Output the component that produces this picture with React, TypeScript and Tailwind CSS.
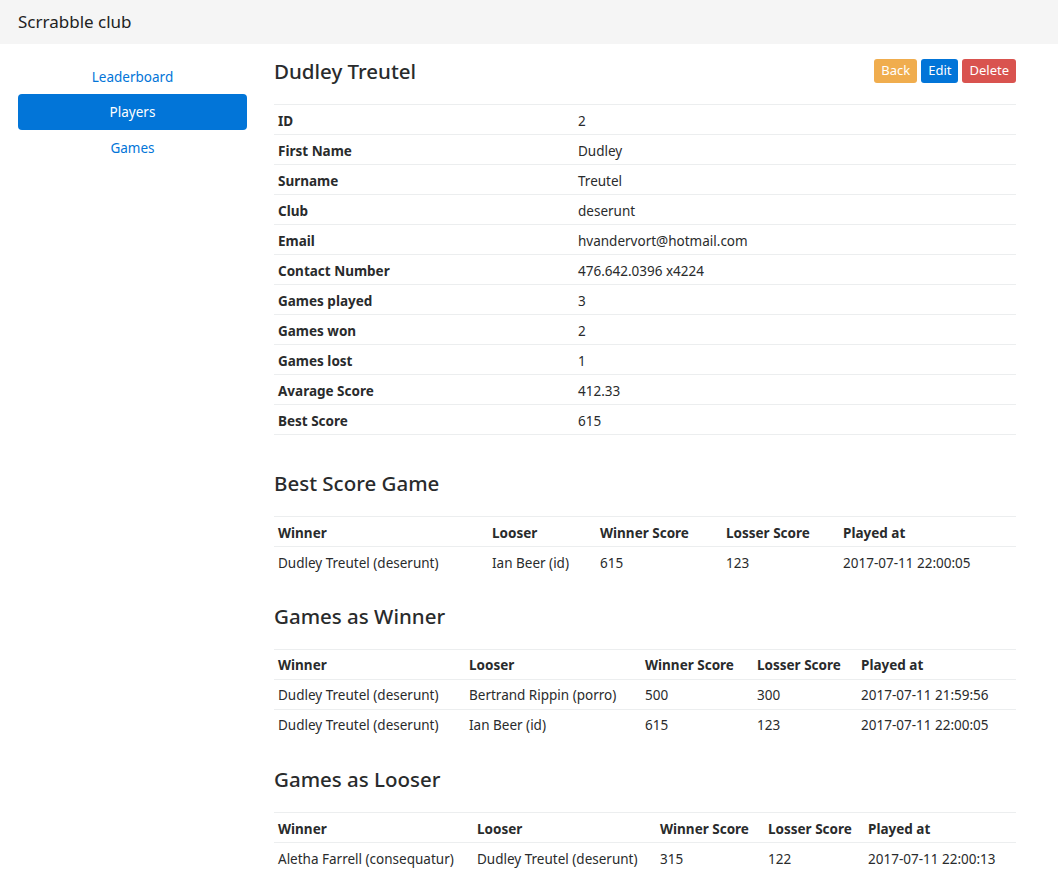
import React from "react";

type GameRow = {
  winner: string;
  looser: string;
  winnerScore: number;
  losserScore: number;
  playedAt: string;
};

const details: [string, string][] = [
  ["ID", "2"],
  ["First Name", "Dudley"],
  ["Surname", "Treutel"],
  ["Club", "deserunt"],
  ["Email", "hvandervort@hotmail.com"],
  ["Contact Number", "476.642.0396 x4224"],
  ["Games played", "3"],
  ["Games won", "2"],
  ["Games lost", "1"],
  ["Avarage Score", "412.33"],
  ["Best Score", "615"],
];

const bestGame: GameRow[] = [
  {
    winner: "Dudley Treutel (deserunt)",
    looser: "Ian Beer (id)",
    winnerScore: 615,
    losserScore: 123,
    playedAt: "2017-07-11 22:00:05",
  },
];

const wonGames: GameRow[] = [
  {
    winner: "Dudley Treutel (deserunt)",
    looser: "Bertrand Rippin (porro)",
    winnerScore: 500,
    losserScore: 300,
    playedAt: "2017-07-11 21:59:56",
  },
  {
    winner: "Dudley Treutel (deserunt)",
    looser: "Ian Beer (id)",
    winnerScore: 615,
    losserScore: 123,
    playedAt: "2017-07-11 22:00:05",
  },
];

const lostGames: GameRow[] = [
  {
    winner: "Aletha Farrell (consequatur)",
    looser: "Dudley Treutel (deserunt)",
    winnerScore: 315,
    losserScore: 122,
    playedAt: "2017-07-11 22:00:13",
  },
];

const GamesTable = ({ rows, cols }: { rows: GameRow[]; cols: number[] }) => {
  return (
    <table className="w-full table-fixed border-collapse text-[13.5px]">
      <colgroup>
        {cols.map((w, i) => (
          <col key={i} style={{ width: w }} />
        ))}
      </colgroup>
      <thead>
        <tr className="h-[30px] border-t border-b border-[#eceeef] text-left">
          <th className="px-1 pt-[3px] font-bold">Winner</th>
          <th className="px-1 pt-[3px] font-bold">Looser</th>
          <th className="px-1 pt-[3px] font-bold">Winner Score</th>
          <th className="px-1 pt-[3px] font-bold">Losser Score</th>
          <th className="px-1 pt-[3px] font-bold">Played at</th>
        </tr>
      </thead>
      <tbody>
        {rows.map((r, i) => (
          <tr key={i} className="h-[30px] border-t border-[#eceeef] first:border-t-0">
            <td className="px-1 pt-[2px] whitespace-nowrap">{r.winner}</td>
            <td className="px-1 pt-[2px] whitespace-nowrap">{r.looser}</td>
            <td className="px-1 pt-[2px]">{r.winnerScore}</td>
            <td className="px-1 pt-[2px]">{r.losserScore}</td>
            <td className="px-1 pt-[2px] whitespace-nowrap">{r.playedAt}</td>
          </tr>
        ))}
      </tbody>
    </table>
  );
};

const App = () => {
  return (
    <div
      className="min-h-screen bg-white text-[#292b2c]"
      style={{ fontFamily: '"Noto Sans", "Open Sans", sans-serif' }}
    >
      {/* Navbar */}
      <div className="flex h-11 items-center bg-[#f5f5f5] px-[18px]">
        <span className="text-[17px] text-[#222]">Scrrabble club</span>
      </div>

      <div className="flex pl-[18px]">
        {/* Sidebar */}
        <div className="w-[229px] shrink-0 pt-[16px]">
          <a className="flex h-[34px] items-center justify-center text-[13.5px] text-[#0275d8]">
            Leaderboard
          </a>
          <a className="flex h-[36px] items-center justify-center rounded-[4px] bg-[#0275d8] text-[13.5px] text-white">
            Players
          </a>
          <a className="flex h-[37px] items-center justify-center text-[13.5px] text-[#0275d8]">
            Games
          </a>
        </div>

        {/* Main */}
        <div className="ml-[27px] w-[742px] pt-[14px] pb-4">
          <div className="mb-[20px] flex h-[26px] items-center justify-between">
            <h2 className="text-[20.5px] leading-none font-medium">Dudley Treutel</h2>
            <div className="flex gap-1">
              <button className="h-6 rounded-[3px] bg-[#f0ad4e] px-[7px] text-[13px] text-white">
                Back
              </button>
              <button className="h-6 rounded-[3px] bg-[#0275d8] px-[7px] text-[13px] text-white">
                Edit
              </button>
              <button className="h-6 rounded-[3px] bg-[#d9534f] px-[7px] text-[13px] text-white">
                Delete
              </button>
            </div>
          </div>

          <table className="w-full table-fixed border-collapse text-[13.5px]">
            <colgroup>
              <col style={{ width: 300 }} />
              <col />
            </colgroup>
            <tbody>
              {details.map(([k, v]) => (
                <tr key={k} className="h-[30px] border-t border-b border-[#eceeef]">
                  <td className="px-1 pt-[3px] font-bold">{k}</td>
                  <td className="px-1 pt-[3px]">{v}</td>
                </tr>
              ))}
            </tbody>
          </table>

          <h3 className="mt-[32px] mb-[17px] flex h-8 items-center text-[20.5px] font-medium">
            Best Score Game
          </h3>
          <GamesTable rows={bestGame} cols={[214, 108, 126, 117, 177]} />

          <h3 className="mt-[24px] mb-[16px] flex h-8 items-center text-[20.5px] font-medium">
            Games as Winner
          </h3>
          <GamesTable rows={wonGames} cols={[191, 176, 112, 104, 159]} />

          <h3 className="mt-[24px] mb-[17px] flex h-8 items-center text-[20.5px] font-medium">
            Games as Looser
          </h3>
          <GamesTable rows={lostGames} cols={[199, 183, 108, 100, 152]} />
        </div>
      </div>
    </div>
  );
};

export default App;
